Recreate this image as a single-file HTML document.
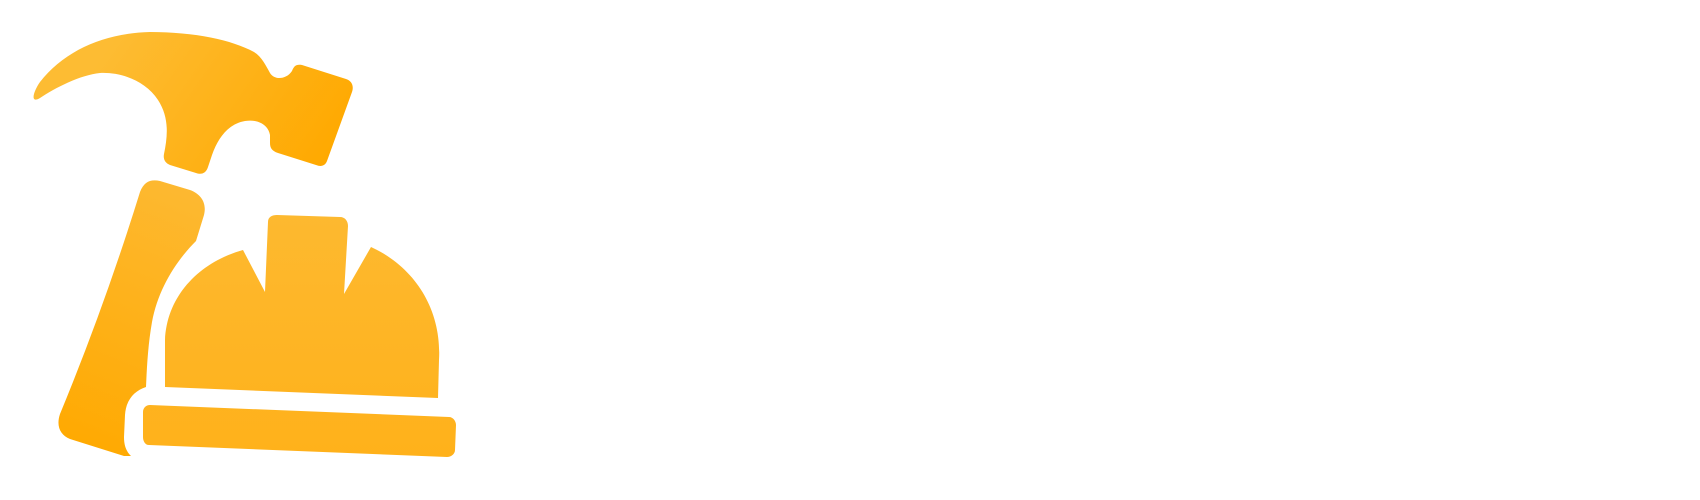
<!DOCTYPE html>
<html><head><meta charset="utf-8"><style>
html,body{margin:0;padding:0;background:#fff;width:1700px;height:500px;overflow:hidden}
svg{position:absolute;left:0;top:0}
</style></head><body>
<svg width="1700" height="500" viewBox="0 0 1700 500">
<defs>
<linearGradient id="g1" gradientUnits="userSpaceOnUse" x1="120" y1="30" x2="320" y2="170"><stop offset="0" stop-color="#FDBC33"/><stop offset="1" stop-color="#FFA900"/></linearGradient>
<linearGradient id="g2" gradientUnits="userSpaceOnUse" x1="180" y1="180" x2="70" y2="450"><stop offset="0" stop-color="#FDB932"/><stop offset="1" stop-color="#FFA900"/></linearGradient>
<linearGradient id="g3" gradientUnits="userSpaceOnUse" x1="0" y1="210" x2="0" y2="460"><stop offset="0" stop-color="#FDB930"/><stop offset="1" stop-color="#FFB11A"/></linearGradient>
</defs>
<path fill="url(#g1)" d="M40,98 C30,104 33,92 40,82 C65,50 105,33 150,32 C195,32 232,40 254,52 C262,57 266,66 270,73 C274,80 286,80 292,71 C294,66 296,64 302,65 L346,79 C352,81 354,86 352,92 L327,161 C325,166 321,167 316,165 L278,153 C272,151 270,148 270,143 L270,135 C268,124 257,119 245,121 C228,124 218,138 212,155 L208,167 C206,173 202,175 196,173 L170,165 C165,163 163,159 164,154 C168,135 169,117 158,100 C145,80 120,72 100,73 C80,75 55,88 40,98 Z"/>
<path fill="url(#g2)" d="M140,192 C144,182 150,179 160,181 L190,190 C201,194 207,203 204,215 L196,241 C175,262 158,290 152,322 C148,345 147,365 146,387 C134,391 126,400 125,415 L124,437 C124,447 127,452 131,456 L124,456 L70,439 C60,435 56,426 60,414 Q105,305 140,192 Z"/>
<path fill="url(#g3)" d="M165,387 L165,340 C167,295 200,262 243,250 L265,292 L268,222 C268,217 272,215 277,215 L340,217 C345,217 348,221 348,226 L344,294 L371,247 C415,267 442,310 439,360 L438,398 Z"/>
<path fill="url(#g3)" d="M150,405 L449,417 C453,417 456,421 456,425 L455,450 C455,454 451,457 447,457 L149,445 C145,445 143,441 143,437 L143,412 C143,408 146,405 150,405 Z"/>
</svg>
</body></html>
